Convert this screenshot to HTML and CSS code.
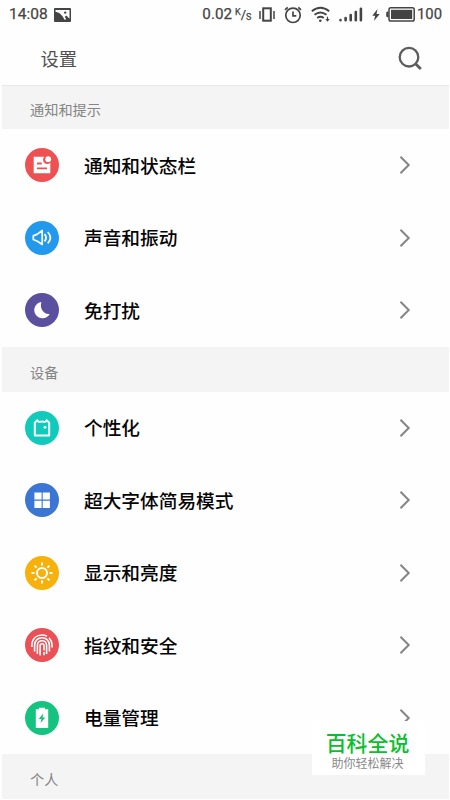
FILE: index.html
```html
<!DOCTYPE html>
<html lang="zh-CN">
<head>
<meta charset="utf-8">
<title>设置</title>
<link rel="stylesheet" href="styles.css">
</head>
<body>
<svg class="defs" width="0" height="0"><symbol id="chevron" viewBox="0 0 12 20"><path d="M1.500 1.800 9.700 10l-8.200 8.200" fill="none" stroke="#858585" stroke-width="2"/></symbol></svg>
<div class="screen">
  <header class="status">
    <span class="time">14:08</span>
    <svg class="picture" width="17" height="14" viewBox="0 0 17 14"><rect width="17" height="14" rx="1" fill="#444"/><path d="M1.500 2h14v8.800L12.300 7.500 10.800 8.700l1.300 2.400-1.300.8-2.300-3.600C6.500 5.500 4 4 1.500 3.800z" fill="#fff"/><circle cx="11.200" cy="4.600" r="1.200" fill="#444"/></svg>
    <span class="speed">0.02</span>
    <span class="unit"><sup>K</sup>/<sub>S</sub></span>
    <svg class="vibrate" width="16" height="15" viewBox="0 0 16 15" fill="none" stroke="#444"><rect x="4.200" y="1.300" width="7.600" height="12.400" stroke-width="2"/><path d="M1 4v8M15 4v8" stroke-width="1.500"/></svg>
    <svg class="alarm" width="18" height="18" viewBox="0 0 18 18" fill="none" stroke="#444" stroke-width="1.700"><circle cx="9" cy="9.300" r="7.200"/><path d="M9 5.500v4.300h3.300M1 3.900l2.700-2.500M17 3.900l-2.700-2.500"/></svg>
    <svg class="wifi" width="20" height="17" viewBox="0 0 20 17" fill="none" stroke="#444" stroke-width="1.900"><path d="M.8 5.300q8.700-7 17.400 0M3.500 8.800q6-4.700 12 0M6.200 12q3.300-2.500 6.600 0"/><circle cx="9.300" cy="14.700" r="1.300" fill="#444" stroke="none"/><path d="M14.300 13h4.400l-2.200 2.700z" fill="#444" stroke="none"/><path d="M16.500 10.700v3" stroke-width="1.200"/></svg>
    <svg class="signal" width="24" height="15" viewBox="0 0 24 15" fill="none" stroke="#444" stroke-width="2.600" stroke-linecap="round"><path d="M1.500 13v.3M6.600 11v2.300M11.700 8v5.300M16.800 5v8.300M21.900 1.700v11.600"/></svg>
    <svg class="bolt" width="8" height="12" viewBox="0 0 8 12"><path d="M5.500 0 .3 6.700h2.900L1.900 12 7.700 5H4.500z" fill="#444"/></svg>
    <svg class="battery" width="29" height="15" viewBox="0 0 29 15"><rect x="3" y=".8" width="25.200" height="13.200" rx="1.800" fill="none" stroke="#444" stroke-width="1.500"/><rect x="5" y="2.800" width="21.200" height="9.200" fill="#444"/><path d="M2.500 4.500H1.200L.2 5.500v3.800l1 1h1.300z" fill="#444"/></svg>
    <span class="percent">100</span>
  </header>
  <div class="titlebar">
    <h1>设置</h1>
    <svg class="search" width="25" height="25" viewBox="0 0 25 25" fill="none" stroke="#5c5c5c"><circle cx="11" cy="11.200" r="9.300" stroke-width="2.300"/><path d="m17 17.200 5.800 5.800" stroke-width="2.800"/></svg>
  </div>
  <main>
    <h2 class="first">通知和提示</h2>
    <ul>
      <li><svg class="icon" viewBox="0 0 34 34"><circle cx="17" cy="17" r="17" fill="#ef5152"/><path d="M8.700 8.700h10.600a4.200 4.200 0 0 0 6 6v10.600H8.700z" fill="#fff"/><circle cx="23.200" cy="11.200" r="2.900" fill="#fff"/><path d="M12 15.500h4.800M12 20.300h10" stroke="#ef5152" stroke-width="1.800"/></svg><span>通知和状态栏</span><svg class="chevron"><use href="#chevron"/></svg></li>
      <li><svg class="icon" viewBox="0 0 34 34"><circle cx="17" cy="17" r="17" fill="#2299ed"/><g fill="none" stroke="#fff" stroke-width="1.700"><path d="M17.200 9.500v14L12.400 20.300 8.300 18.500v-3.600l4.100-1.800z" stroke-linejoin="round"/><path d="M19.500 13q3 3.700 0 7.400" stroke-width="1.800"/><path d="M22.700 11q5.300 5.700 0 11.400"/></g></svg><span>声音和振动</span><svg class="chevron"><use href="#chevron"/></svg></li>
      <li><svg class="icon" viewBox="0 0 34 34"><circle cx="17" cy="17" r="17" fill="#5a509f"/><path d="M16.400 9A8.200 8.200 0 1 0 24.700 21C18.800 21.800 14.300 15.500 16.400 9z" fill="#fff"/></svg><span>免打扰</span><svg class="chevron"><use href="#chevron"/></svg></li>
    </ul>
    <h2>设备</h2>
    <ul>
      <li><svg class="icon" viewBox="0 0 34 34"><circle cx="17" cy="17" r="17" fill="#10cbbb"/><path d="M12.300 9.300 9.800 11.700v12.900h14.400V11.700l-2.500-2.400q-1.200 2-2.400 1.600-2.300-1-4.600 0-1.200.4-2.400-1.600z" fill="none" stroke="#fff" stroke-width="2" stroke-linejoin="round"/><circle cx="20" cy="16.300" r="1.400" fill="#fff"/></svg><span>个性化</span><svg class="chevron"><use href="#chevron"/></svg></li>
      <li><svg class="icon" viewBox="0 0 34 34"><circle cx="17" cy="17" r="17" fill="#3b76d5"/><path d="M9.400 9.400h7.200v7.200H9.400zM17.700 9.400h7.200v7.200h-7.200zM9.400 17.700h7.200v7.200H9.400zM17.700 17.700h7.200v7.200h-7.200z" fill="#fff"/></svg><span>超大字体简易模式</span><svg class="chevron"><use href="#chevron"/></svg></li>
      <li><svg class="icon" viewBox="0 0 34 34"><circle cx="17" cy="17" r="17" fill="#f6b10c"/><g fill="none" stroke="#fff" stroke-width="2"><circle cx="17" cy="17" r="5"/><path d="M17 6.500v3M17 24.500v3M6.500 17h3M24.500 17h3M9.600 9.600l2 2M22.400 22.400l2 2M9.600 24.400l2-2M22.400 11.600l2-2"/></g></svg><span>显示和亮度</span><svg class="chevron"><use href="#chevron"/></svg></li>
      <li><svg class="icon" viewBox="0 0 34 34"><circle cx="17" cy="17" r="17" fill="#ea5055"/><g fill="none" stroke="#fff" stroke-width="1.600"><path d="M6.900 19v-2.500C7.500 10 12 7 17 7q3 0 5 1.300M24 9.700q2.900 3 3.100 7v2.800"/><path d="M9.600 23.500V17c.2-4.500 3.500-7.300 7.400-7.300s7.200 2.800 7.400 7.300v6.500"/><path d="M12.400 26V17.500c0-6.400 9.200-6.400 9.200 0V26"/><path d="M15.100 27.500v-9.700c0-2.700 3.900-2.700 3.900 0v4.700M19 24v3.200"/></g></svg><span>指纹和安全</span><svg class="chevron"><use href="#chevron"/></svg></li>
      <li><svg class="icon" viewBox="0 0 34 34"><circle cx="17" cy="17" r="17" fill="#13c37f"/><path d="M14 6.800h6v1.500h3.200V27H10.800V8.300H14z" fill="#fff"/><path d="m18.200 12.500-4.500 5.500h2.700L15.600 22l4.700-5.500h-2.700z" fill="#13c37f"/></svg><span>电量管理</span><svg class="chevron"><use href="#chevron"/></svg></li>
    </ul>
    <h2>个人</h2>
  </main>
  <aside class="badge"><strong>百科全说</strong><span>助你轻松解决</span></aside>
</div>
</body>
</html>
```

FILE: styles.css
```css
* { box-sizing: border-box; }
body { margin: 0; background: #fff; }
.defs { position: absolute; }
.screen {
  position: relative;
  width: 450px;
  height: 800px;
  overflow: hidden;
  background: #fefefe;
  font-family: "Noto Sans CJK SC", sans-serif;
}
.status {
  display: flex;
  align-items: center;
  height: 29px;
  padding: 0 8px 0 9px;
  color: #444;
  font: 400 16px/29px Roboto, sans-serif;
  -webkit-text-stroke: .25px #444;
}
.status svg { flex: none; }
.time { width: 46px; font-size: 15.500px; }
.speed { width: 32px; margin-left: 131.500px; font-size: 15.200px; }
.unit { width: 16px; margin-left: 1.500px; font-size: 13px; white-space: nowrap; }
.unit sup, .unit sub { font-size: 9px; line-height: 0; }
.unit sup { vertical-align: 4px; }
.unit sub { vertical-align: -1px; }
.vibrate { margin-left: 8px; }
.alarm { margin-left: 9px; }
.wifi { margin-left: 9px; }
.signal { margin-left: 8px; }
.bolt { margin-left: 9px; }
.battery { margin-left: 6px; }
.percent { margin-left: 2px; font-size: 14.800px; }
.titlebar {
  display: flex;
  align-items: center;
  justify-content: space-between;
  height: 56px;
  padding: 3px 27px 0 40.500px;
}
h1 { margin: 0 0 1px; color: #505050; font-size: 18.300px; font-weight: 400; line-height: 28px; }
h2 {
  height: 45px;
  margin: 0 1px 0 2px;
  padding: 3px 0 0 28px;
  background: #f4f4f4;
  color: #858585;
  font-size: 14.200px;
  font-weight: 400;
  line-height: 45px;
}
h2.first { height: 44px; padding-top: 1px; border-top: 1px solid #e9e9e9; }
ul { margin: 0; padding: 0; list-style: none; }
li {
  display: flex;
  align-items: center;
  height: 72.500px;
  padding: 0 39px 0 25px;
  color: #050505;
  font-size: 18.700px;
  font-weight: 500;
  line-height: 28px;
}
li span { flex: 1; margin: 0 0 1.500px 25px; }
.icon { width: 34px; height: 34px; }
.chevron { width: 12px; height: 20px; }
.badge {
  position: absolute;
  left: 312px;
  top: 721px;
  display: flex;
  flex-direction: column;
  align-items: center;
  width: 113px;
  height: 54px;
  padding-right: 2px;
  background: #fff;
}
.badge strong { margin-top: 8px; color: #0abf2c; font-size: 20.900px; font-weight: 500; line-height: 27px; }
.badge span { color: #888; font-size: 12px; line-height: 13px; }
```
